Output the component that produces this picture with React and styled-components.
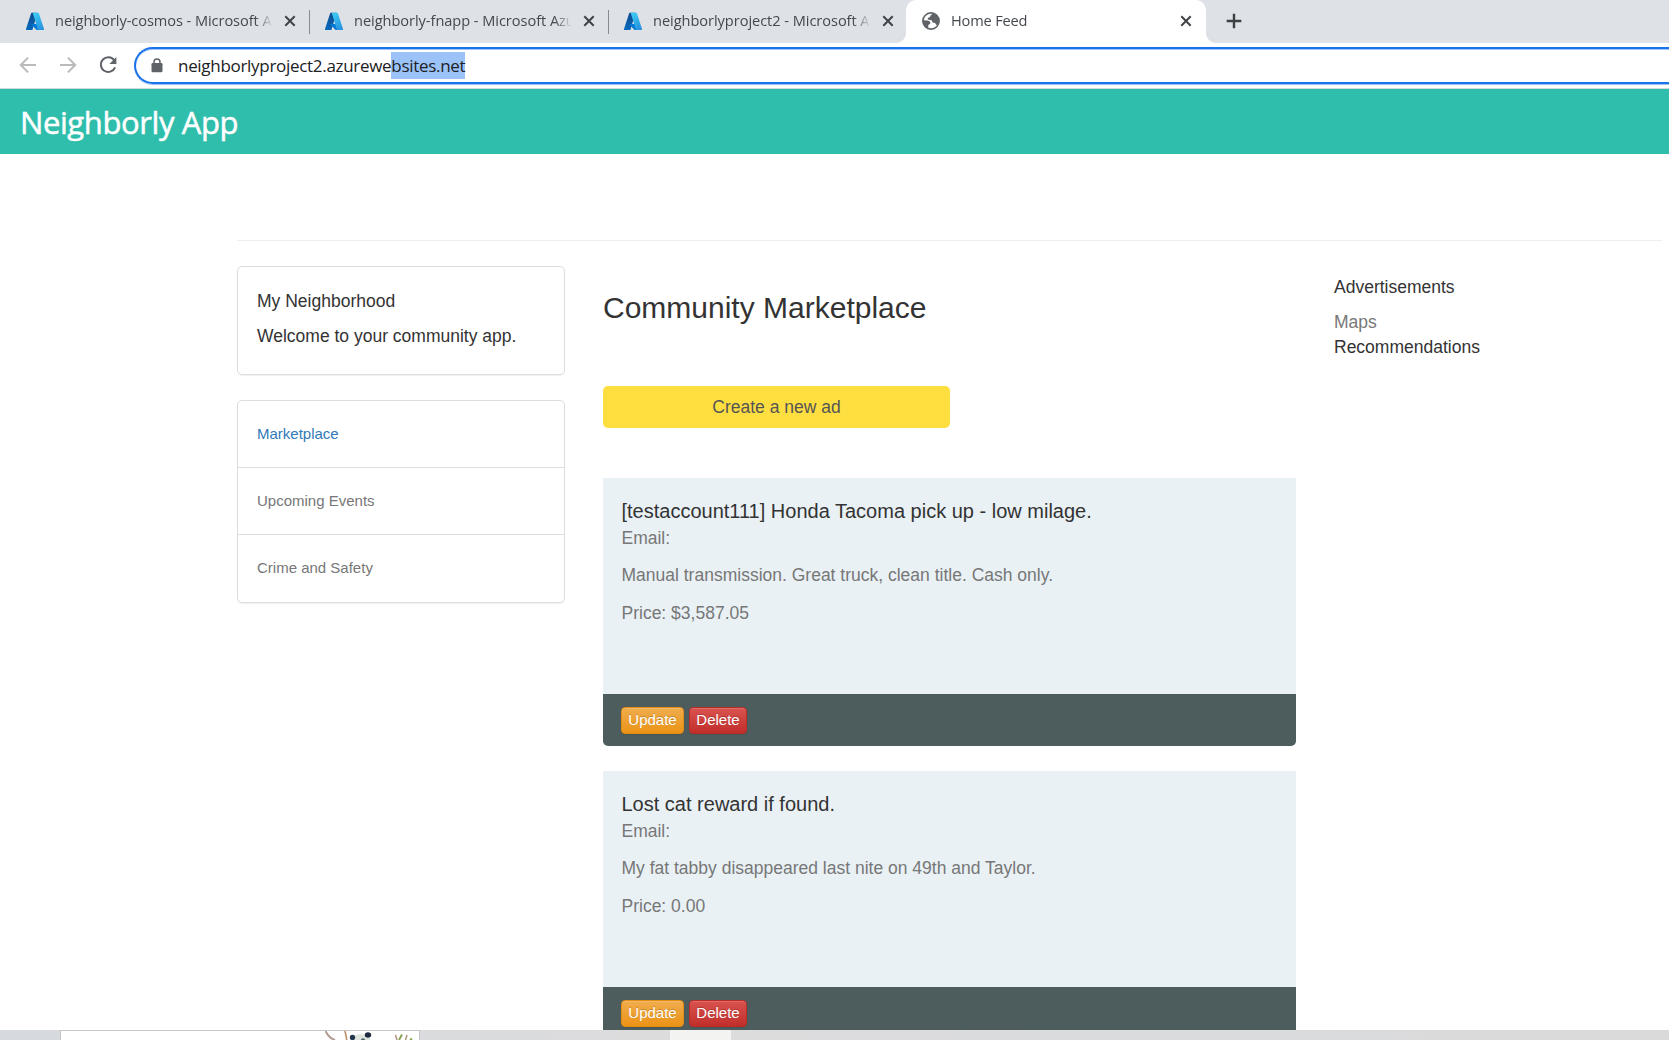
import React from "react";
import styled, { createGlobalStyle } from "styled-components";

const GlobalStyle = createGlobalStyle`
  *, *::before, *::after { box-sizing: border-box; }
  body { margin: 0; overflow: hidden; background: #fff; }
  p, h1, h2, h3 { margin: 0; font-weight: 400; }
  button { font: inherit; margin: 0; padding: 0; border: 0; background: none; }
  a { text-decoration: none; }
`;

const Screen = styled.div`
  width: 1669px;
  height: 1040px;
  display: flex;
  flex-direction: column;
  overflow: hidden;
  background: #fff;
  color: #333;
  font-family: "Liberation Sans", Arial, sans-serif;
  font-size: 17.5px;
  line-height: 25px;
`;

/* Browser frame */

const TabStrip = styled.div`
  flex: none;
  height: 43px;
  padding-left: 10px;
  display: flex;
  background: #dee1e6;
  font-family: "Open Sans", "Noto Sans", sans-serif;
  font-size: 14.6px;
  line-height: 20px;
  color: #45494d;
`;

const Tab = styled.div`
  position: relative;
  width: ${(p) => (p.$active ? 300 : p.$last ? 298 : 299)}px;
  height: 43px;
  padding: 0 ${(p) => (p.$active ? 13 : p.$last ? 11 : 12)}px 1px 16px;
  display: flex;
  align-items: center;
  background: ${(p) => (p.$active ? "#fff" : "transparent")};
  border-radius: 10px 10px 0 0;

  &::before, &::after {
    content: "";
    display: ${(p) => (p.$active ? "block" : "none")};
    position: absolute;
    bottom: 0;
    width: 10px;
    height: 10px;
  }
  &::before { left: -10px; background: radial-gradient(circle at 0 0, transparent 9.6px, #fff 10.2px); }
  &::after { right: -10px; background: radial-gradient(circle at 100% 0, transparent 9.6px, #fff 10.2px); }
`;

const TabTitle = styled.span`
  width: 218px;
  flex: none;
  margin-left: 11px;
  margin-bottom: 2px;
  overflow: hidden;
  white-space: nowrap;
  letter-spacing: ${(p) => p.$track}px;
  mask-image: linear-gradient(to right, #000 200px, transparent 218px);
`;

const TabClose = styled.button`
  width: 14px;
  height: 14px;
  margin-left: auto;
  display: flex;
`;

const TabDivider = styled.i`
  position: absolute;
  right: -1px;
  top: 10px;
  width: 1px;
  height: 24px;
  background: #868b90;
`;

const NewTab = styled.button`
  width: 16px;
  height: 16px;
  margin: 13px 0 0 20px;
  display: flex;
`;

const Toolbar = styled.div`
  flex: none;
  height: 46px;
  padding: 4px 0 0 18px;
  display: flex;
  border-bottom: 1px solid #cfd8da;
  background: #fff;
`;

const NavButton = styled.button`
  width: 20px;
  height: 36px;
  margin-right: ${(p) => p.$gap}px;
  display: flex;
  align-items: center;
  justify-content: center;
`;

const Omnibox = styled.div`
  flex: 1;
  height: 37px;
  padding-left: 15px;
  display: flex;
  align-items: center;
  border: 2px solid #1a73e8;
  border-right: 0;
  border-radius: 19px 0 0 19px;
  box-shadow: inset 0 1px 0 #9dc3f7, 0 1px 0 #9dc3f7;
  font-family: "Open Sans", "Noto Sans", sans-serif;
  font-size: 17px;
  line-height: 27px;
  color: #202124;
`;

const Url = styled.span`
  margin: 0 0 0 15px;
  letter-spacing: ${(p) => p.$track}px;
  white-space: nowrap;
`;

const Selected = styled.span`
  display: inline-block;
  height: 27px;
  background: #9bc3f7;
`;

/* Application */

const AppHeader = styled.header`
  flex: none;
  height: 65px;
  padding: 0 20px;
  display: flex;
  align-items: center;
  background: #2fbdac;
`;

const Brand = styled.h1`
  font-family: "Open Sans", "Noto Sans", sans-serif;
  font-size: 31px;
  line-height: 40px;
  letter-spacing: ${(p) => p.$track}px;
  color: #fff;
  -webkit-text-stroke: 0.5px #fff;
`;

const Page = styled.main`
  flex: none;
  height: 876px;
  padding: 86px 7px 0 237px;
  overflow: hidden;
`;

const Rule = styled.hr`
  height: 1px;
  margin: 0 0 25px;
  border: 0;
  background: #eee;
`;

const Columns = styled.div`
  display: grid;
  grid-template-columns: 328px 693px 1fr;
  column-gap: 38px;
  align-items: start;
`;

const Sidebar = styled.aside`
  display: flex;
  flex-direction: column;
  gap: 25px;
`;

const Card = styled.section`
  border: 1px solid #ddd;
  border-radius: 5px;
  box-shadow: 0 1px 1px rgba(0, 0, 0, 0.06);
`;

const Welcome = styled(Card)`
  height: 109px;
  padding: 22px 19px 0;
  display: flex;
  flex-direction: column;
  gap: 10px;
`;

const Line = styled.p`
  color: ${(p) => (p.$muted ? "#777" : "#333")};
  white-space: nowrap;
`;

const NavLink = styled.a`
  height: 67px;
  padding: 22px 19px 0;
  display: block;
  font-size: 15px;
  line-height: 22px;
  color: ${(p) => (p.$active ? "#337ab7" : "#777")};
  border-bottom: ${(p) => (p.$last ? "0" : "1px solid #ddd")};
`;

const Feed = styled.section`
  padding-top: 25px;
  display: flex;
  flex-direction: column;
`;

const FeedTitle = styled.h2`
  font-size: 30px;
  line-height: 33px;
`;

const CreateButton = styled.button`
  width: 347px;
  height: 42px;
  margin: 62px 0 50px;
  border-radius: 5px;
  background: #ffde40;
  color: #555;
`;

const Ad = styled.article`
  margin-bottom: 25px;
  border-radius: 0 0 5px 5px;
  overflow: hidden;
`;

const AdBody = styled.div`
  height: 216px;
  padding: 22px 18.5px 0;
  background: #e9f1f5;
`;

const AdTitle = styled.h3`
  margin-bottom: 4px;
  font-size: 20px;
  line-height: 22px;
`;

const AdText = styled(Line)`
  margin-bottom: ${(p) => p.$after}px;
`;

const AdFooter = styled.div`
  height: 52px;
  padding: 13px 18px 0;
  display: flex;
  gap: 5px;
  background: #4d5c5c;
`;

const tones = {
  update: { top: "#f0ad4e", bottom: "#eb9316", edge: "#e38d13" },
  remove: { top: "#d9534f", bottom: "#c12e2a", edge: "#b92c28" },
};

const SmallButton = styled.button`
  width: ${(p) => p.$width}px;
  height: 27px;
  border: 1px solid ${(p) => tones[p.$tone].edge};
  border-radius: 4px;
  background: linear-gradient(${(p) => tones[p.$tone].top}, ${(p) => tones[p.$tone].bottom});
  box-shadow: inset 0 1px 0 rgba(255, 255, 255, 0.15), 0 1px 1px rgba(0, 0, 0, 0.075);
  text-shadow: 0 -1px 0 rgba(0, 0, 0, 0.2);
  color: #fff;
  font-size: 15px;
  line-height: 22px;
  padding-bottom: 1px;
`;

const Extras = styled.aside`
  padding: 9px 0 0 0;
`;

const MapsLine = styled(Line)`
  margin-top: 10px;
`;

/* Desktop edge under the window */

const Desktop = styled.div`
  flex: none;
  height: 10px;
  padding-left: 60px;
  display: flex;
  background: linear-gradient(to right, #d6d9de, #dcdcdd 40%, #dadbdd 70%, #dadada);
`;

const Note = styled.div`
  width: 360px;
  height: 10px;
  border: 1px solid #c6c6c6;
  border-bottom: 0;
  background: #fff;
  display: flex;
  justify-content: flex-end;
  overflow: hidden;
`;

const Patch = styled.div`
  width: 61px;
  margin-left: 250px;
  background: #f3f3f2;
`;

function AzureLogo() {
  return (
    <svg width="18" height="19" viewBox="0 0 96 96" preserveAspectRatio="none">
      <defs>
        <linearGradient id="azLeft" x1="0.7" y1="0" x2="0.3" y2="1">
          <stop offset="0" stopColor="#114a8b" />
          <stop offset="1" stopColor="#0669bc" />
        </linearGradient>
        <linearGradient id="azRight" x1="0.3" y1="0" x2="0.7" y2="1">
          <stop offset="0" stopColor="#3ccbf4" />
          <stop offset="1" stopColor="#2892df" />
        </linearGradient>
      </defs>
      <path fill="url(#azLeft)" d="M31 4h30L35 88a4 4 0 0 1-4 3H4a4 4 0 0 1-4-5L27 7a4 4 0 0 1 4-3z" />
      <path fill="#0078d4" d="M71.2 60.3H29.9a1.9 1.9 0 0 0-1.300 3.300l26.500 26.300a4.200 4.200 0 0 0 2.900 1.100h23.400z" />
      <path fill="url(#azRight)" d="M69 7a4 4 0 0 0-4-3H33a4 4 0 0 1 4 3l25 79a4 4 0 0 1-4 5h34a4 4 0 0 0 4-5z" />
    </svg>
  );
}

function GlobeIcon() {
  return (
    <svg width="18" height="18" viewBox="0 0 18 18">
      <circle cx="9" cy="9" r="8.1" fill="#fff" stroke="#5f6368" strokeWidth="1.7" />
      <path
        fill="#5f6368"
        d="M10.600 1.200c-.2 1.100-1 1.300-1.700 1.900-.8.600-.3 1.700-1.300 2.100-.9.300-1.900.3-1.900 1.400 0 1 .7 1.300 1.800 1.300 1.500 0 2.800.4 2.800 1.800 0 .9.700 1 1.700 1 .9 0 1.500.4 1.600 1.300l1.400 1.500c3.200-3.500 2.600-10.300-4.400-12.300zM.9 8.300l4.600.2c1.600.1 2.800.9 2.800 2.500 0 1-.4 1.400-1.300 1.500-.9.200-.7 1.300-.7 2.100v1.700C2.800 15.200.7 11.800.9 8.300z"
      />
    </svg>
  );
}

function CloseIcon() {
  return (
    <svg width="14" height="14" viewBox="0 0 14 14">
      <path d="M2.300 2.300l9.400 9.400M11.700 2.300l-9.400 9.400" stroke="#3f4347" strokeWidth="2" fill="none" />
    </svg>
  );
}

function PlusIcon() {
  return (
    <svg width="16" height="16" viewBox="0 0 16 16">
      <path d="M8 .7v14.600M.7 8h14.600" stroke="#3c4043" strokeWidth="2.400" fill="none" />
    </svg>
  );
}

function ArrowIcon({ forward }) {
  return (
    <svg width="18" height="18" viewBox="0 0 18 18">
      <path
        d={forward ? "M1 9h15M8.900 1.600l7.400 7.400-7.400 7.400" : "M17 9H2M9.100 1.600L1.700 9l7.400 7.400"}
        stroke="#bababc"
        strokeWidth="2"
        fill="none"
      />
    </svg>
  );
}

function ReloadIcon() {
  return (
    <svg width="20" height="20" viewBox="0 0 20 20">
      <path d="M16.300 5.300A7.400 7.400 0 1 0 17.100 12.400" stroke="#5f6368" strokeWidth="2" fill="none" />
      <path d="M18.400 2v7h-7z" fill="#5f6368" />
    </svg>
  );
}

function LockIcon() {
  return (
    <svg width="12" height="15" viewBox="0 0 12 15">
      <rect x=".5" y="5" width="11" height="9.3" rx="1.3" fill="#5f6368" />
      <path d="M3 5.500V4a3 3 0 0 1 6 0v1.500" stroke="#5f6368" strokeWidth="1.500" fill="none" />
    </svg>
  );
}

function PandaDrawing() {
  return (
    <svg width="94" height="9" viewBox="0 0 94 9">
      <path d="M.5 0c2 4 4.500 7.500 9.500 9" stroke="#b39a93" strokeWidth="2" fill="none" />
      <path d="M20 0c.3 3 1.800 6 1.600 9" stroke="#b98f66" strokeWidth="1.600" fill="none" />
      <path d="M26 9C28 1.500 43 1 46 9z" fill="#dfe5dc" />
      <ellipse cx="27.5" cy="6.5" rx="2.700" ry="2.700" fill="#26364e" />
      <ellipse cx="43" cy="4" rx="3.200" ry="2.800" fill="#1f2a40" />
      <ellipse cx="38" cy="8.700" rx="2" ry="1.500" fill="#4b6070" />
      <path d="M70.500 4l1.500 5M82 4l-1.500 5" stroke="#b08a78" strokeWidth="1.400" fill="none" />
      <path d="M77 3.500L74 9M87 7.500L85 9" stroke="#86a556" strokeWidth="2" fill="none" />
    </svg>
  );
}

const azureTabs = [
  { title: "neighborly-cosmos - Microsoft Azure", track: -0.07 },
  { title: "neighborly-fnapp - Microsoft Azure", track: -0.05 },
  { title: "neighborlyproject2 - Microsoft Azure", track: -0.05 },
];

const links = [
  { label: "Marketplace", active: true },
  { label: "Upcoming Events" },
  { label: "Crime and Safety" },
];

const ads = [
  {
    title: "[testaccount111] Honda Tacoma pick up - low milage.",
    text: "Manual transmission. Great truck, clean title. Cash only.",
    price: "$3,587.05",
  },
  {
    title: "Lost cat reward if found.",
    text: "My fat tabby disappeared last nite on 49th and Taylor.",
    price: "0.00",
  },
];

export default function App() {
  return (
    <Screen>
      <GlobalStyle />
      <TabStrip>
        {azureTabs.map((tab, i) => (
          <Tab key={tab.title} $last={i === 2}>
            <AzureLogo />
            <TabTitle $track={tab.track}>{tab.title}</TabTitle>
            <TabClose aria-label="Close tab"><CloseIcon /></TabClose>
            {i < 2 && <TabDivider />}
          </Tab>
        ))}
        <Tab $active>
          <GlobeIcon />
          <TabTitle $track={-0.17}>Home Feed</TabTitle>
          <TabClose aria-label="Close tab"><CloseIcon /></TabClose>
        </Tab>
        <NewTab aria-label="New tab"><PlusIcon /></NewTab>
      </TabStrip>
      <Toolbar>
        <NavButton $gap={20} aria-label="Back"><ArrowIcon /></NavButton>
        <NavButton $gap={20} aria-label="Forward"><ArrowIcon forward /></NavButton>
        <NavButton $gap={16} aria-label="Reload"><ReloadIcon /></NavButton>
        <Omnibox>
          <LockIcon />
          <Url $track={-0.3}>
            neighborlyproject2.azurewe<Selected>bsites.net</Selected>
          </Url>
        </Omnibox>
      </Toolbar>

      <AppHeader>
        <Brand $track={-0.4}>Neighborly App</Brand>
      </AppHeader>

      <Page>
        <Rule />
        <Columns>
          <Sidebar>
            <Welcome>
              <Line>My Neighborhood</Line>
              <Line>Welcome to your community app.</Line>
            </Welcome>
            <Card as="nav">
              {links.map((link, i) => (
                <NavLink key={link.label} $active={link.active} $last={i === links.length - 1}>
                  {link.label}
                </NavLink>
              ))}
            </Card>
          </Sidebar>

          <Feed>
            <FeedTitle>Community Marketplace</FeedTitle>
            <CreateButton>Create a new ad</CreateButton>
            {ads.map((ad) => (
              <Ad key={ad.title}>
                <AdBody>
                  <AdTitle>{ad.title}</AdTitle>
                  <AdText $muted $after={12}>Email:</AdText>
                  <AdText $muted $after={13}>{ad.text}</AdText>
                  <AdText $muted $after={0}>Price: {ad.price}</AdText>
                </AdBody>
                <AdFooter>
                  <SmallButton $tone="update" $width={63}>Update</SmallButton>
                  <SmallButton $tone="remove" $width={58}>Delete</SmallButton>
                </AdFooter>
              </Ad>
            ))}
          </Feed>

          <Extras>
            <Line>Advertisements</Line>
            <MapsLine $muted>Maps</MapsLine>
            <Line>Recommendations</Line>
          </Extras>
        </Columns>
      </Page>

      <Desktop>
        <Note><PandaDrawing /></Note>
        <Patch />
      </Desktop>
    </Screen>
  );
}
